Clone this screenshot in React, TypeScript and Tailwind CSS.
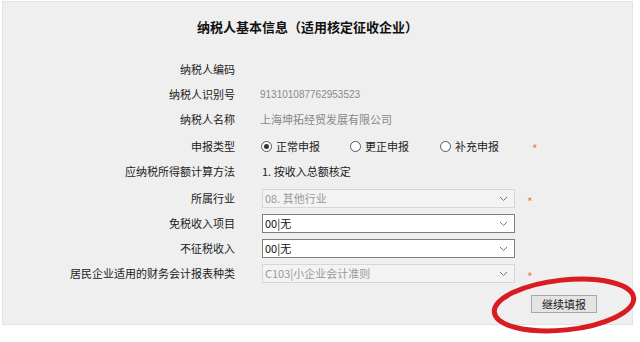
import React from "react";

const font = { fontFamily: '"Noto Sans CJK SC", "Liberation Sans", sans-serif' };

function Chevron() {
  return (
    <svg width="9" height="6" viewBox="0 0 9 6" className="absolute right-[6px] top-1/2 -translate-y-1/2">
      <path d="M1 1 L4.5 4.5 L8 1" fill="none" stroke="#777" strokeWidth="1" />
    </svg>
  );
}

function Select({ text, disabled }: { text: string; disabled?: boolean }) {
  return (
    <div
      className={
        "relative w-[253px] h-[19px] flex items-center pl-[2px] text-[11px] " +
        (disabled
          ? "bg-[#f3f3f3] border border-[#d6d6d6] text-[#9a9a9a]"
          : "bg-white border border-[#7d7d7d] text-[#111]")
      }
    >
      <span className="leading-none">{text}</span>
      <Chevron />
    </div>
  );
}

function Star({ ml }: { ml: string }) {
  return <span className={"text-[#e8804a] text-[12px] leading-none translate-y-[3px] " + ml}>*</span>;
}

function Radio({ checked, label }: { checked?: boolean; label: string }) {
  return (
    <div className="flex items-center gap-[4px]">
      <div className="w-[11px] h-[11px] rounded-full border border-[#555] bg-white flex items-center justify-center">
        {checked && <div className="w-[5px] h-[5px] rounded-full bg-[#333]" />}
      </div>
      <span className="text-[11px] text-[#222] leading-none">{label}</span>
    </div>
  );
}

function Row({ label, h, children }: { label: string; h: string; children?: React.ReactNode }) {
  return (
    <div className={"flex items-center " + h}>
      <div className="w-[232px] text-right text-[11px] text-[#222] leading-none">{label}</div>
      <div className="ml-[27px] flex items-center">{children}</div>
    </div>
  );
}

export default function App() {
  return (
    <div className="relative w-[640px] h-[342px] bg-white px-[2px] pt-[1px]" style={font}>
      <div className="w-[631px] h-[324px] bg-[#efefef] border border-[#e2e2e2] flex flex-col">
        <div className="h-[49px] flex items-center justify-center pr-[20px]">
          <span className="text-[13px] font-bold text-[#111]">纳税人基本信息（适用核定征收企业）</span>
        </div>
        <div className="h-[6px]" />
        <Row label="纳税人编码" h="h-[25px]" />
        <Row label="纳税人识别号" h="h-[25px]">
          <span className="text-[10px] text-[#888] -ml-[2px]" style={{ fontFamily: '"Liberation Sans", sans-serif' }}>
            913101087762953523
          </span>
        </Row>
        <Row label="纳税人名称" h="h-[25px]">
          <span className="text-[11px] text-[#888] -ml-[2px]">上海坤拓经贸发展有限公司</span>
        </Row>
        <Row label="申报类型" h="h-[28px]">
          <div className="flex items-center -ml-[1px]">
            <Radio checked label="正常申报" />
            <div className="w-[30px]" />
            <Radio label="更正申报" />
            <div className="w-[31px]" />
            <Radio label="补充申报" />
            <Star ml="ml-[33px]" />
          </div>
        </Row>
        <Row label="应纳税所得额计算方法" h="h-[22px]">
          <span className="text-[11px] text-[#222]">1. 按收入总额核定</span>
        </Row>
        <div className="h-[4px]" />
        <Row label="所属行业" h="h-[25px]">
          <Select text="08. 其他行业" disabled />
          <Star ml="ml-[12px]" />
        </Row>
        <Row label="免税收入项目" h="h-[25px]">
          <Select text="00|无" />
        </Row>
        <Row label="不征税收入" h="h-[25px]">
          <Select text="00|无" />
        </Row>
        <Row label="居民企业适用的财务会计报表种类" h="h-[25px]">
          <Select text="C103|小企业会计准则" disabled />
          <Star ml="ml-[12px]" />
        </Row>
        <div className="flex justify-end pr-[35px] mt-[9px]">
          <button className="w-[66px] h-[18px] bg-[#e4e4e4] border border-[#a8a8a8] text-[11px] text-[#222] leading-none flex items-center justify-center">
            继续填报
          </button>
        </div>
      </div>
      <svg className="absolute left-0 top-0 pointer-events-none" width="640" height="342">
        <ellipse cx="564" cy="305" rx="70" ry="25" fill="none" stroke="#d91c23" strokeWidth="5" transform="rotate(-6 564 305)" />
      </svg>
    </div>
  );
}
